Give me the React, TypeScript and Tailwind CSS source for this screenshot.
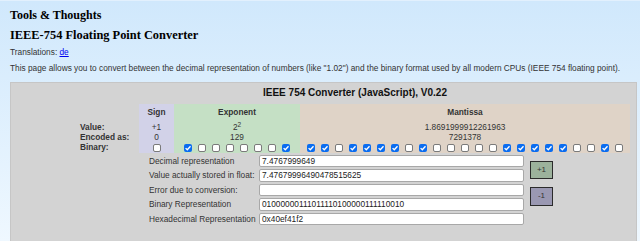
import React from "react";

const expBits = [1, 0, 0, 0, 0, 0, 0, 1];
const manBits = [1, 1, 0, 1, 1, 1, 1, 0, 1, 0, 0, 0, 0, 0, 1, 1, 1, 1, 1, 0, 0, 1, 0];

const Box = ({ on }: { on: boolean }) =>
  on ? (
    <span className="w-[8px] h-[8px] rounded-[2px] bg-[#0a6cf0] flex items-center justify-center">
      <svg width="8" height="8" viewBox="0 0 8 8">
        <path d="M1.6 4.1 L3.3 5.8 L6.5 2.2" stroke="white" strokeWidth="1.3" fill="none" />
      </svg>
    </span>
  ) : (
    <span className="w-[8px] h-[8px] rounded-[2px] bg-white border border-[#7a7a7a]" />
  );

const Row = ({ label, value }: { label: string; value: string }) => (
  <div className="flex items-center h-[12.5px]">
    <div className="w-[110px] text-[8.3px] text-[#333]">{label}</div>
    <div className="w-[265px] h-full bg-white border border-[#a8a8a8] rounded-[2px] px-[2px] flex items-center text-[8.3px] text-[#222] leading-none">
      {value}
    </div>
  </div>
);

export default function App() {
  return (
    <div className="w-[640px] h-[241px] overflow-hidden bg-gradient-to-b from-[#d0e8fc] to-[#eff8ff] border-t border-[#e2f0fd] font-['Liberation_Sans',Arial,sans-serif] text-[#222]">
      <div className="pl-[10px]">
        <div className="pt-[6px] h-[23px] font-['Liberation_Serif',serif] font-bold text-[12px] leading-[16px] text-black">
          Tools &amp; Thoughts
        </div>
        <div className="pt-[3px] h-[20px] font-['Liberation_Serif',serif] font-bold text-[12.4px] leading-[16px] text-black">
          IEEE-754 Floating Point Converter
        </div>
        <div className="pt-[2.5px] h-[14px] text-[8.3px] leading-[10px] text-[#333]">
          Translations: <a className="text-[#0000ee] underline">de</a>
        </div>
        <div className="pt-[5px] text-[8.3px] leading-[10px] text-[#333]">
          This page allows you to convert between the decimal representation of numbers (like "1.02") and the binary format used by all modern CPUs (IEEE 754 floating point).
        </div>

        <div className="mt-[8.5px] w-[627px] h-[160px] bg-[#d3d3d3] border border-[#c6c6c6] pl-[69px]">
          <div className="w-[550px] pt-[4px] text-center font-bold text-[10px] leading-[12px] text-[#111]">
            IEEE 754 Converter (JavaScript), V0.22
          </div>
          <div className="mt-[5px] flex text-[8.3px] text-[#333]">
            <div className="w-[59px] flex flex-col font-bold">
              <div className="h-[18px]" />
              <div className="h-[11px] flex items-center">Value:</div>
              <div className="h-[10px] flex items-center">Encoded as:</div>
              <div className="h-[10px] flex items-center">Binary:</div>
            </div>
            <div className="w-[35px] bg-[#d2d2e8] flex flex-col items-center">
              <div className="h-[18px] flex items-center font-bold">Sign</div>
              <div className="h-[11px] flex items-center">+1</div>
              <div className="h-[10px] flex items-center">0</div>
              <div className="h-[10px] flex items-center">
                <Box on={false} />
              </div>
            </div>
            <div className="w-[126px] bg-[#c5e0c5] flex flex-col items-center">
              <div className="h-[18px] flex items-center font-bold">Exponent</div>
              <div className="h-[11px] flex items-center">
                <span>
                  2<sup className="text-[6.5px]">2</sup>
                </span>
              </div>
              <div className="h-[10px] flex items-center">129</div>
              <div className="h-[10px] flex items-center gap-[6px]">
                {expBits.map((b, i) => (
                  <Box key={i} on={b === 1} />
                ))}
              </div>
            </div>
            <div className="w-[330px] bg-[#dfd3c7] flex flex-col items-center">
              <div className="h-[18px] flex items-center font-bold">Mantissa</div>
              <div className="h-[11px] flex items-center">1.8691999912261963</div>
              <div className="h-[10px] flex items-center">7291378</div>
              <div className="h-[10px] flex items-center gap-[6px]">
                {manBits.map((b, i) => (
                  <Box key={i} on={b === 1} />
                ))}
              </div>
            </div>
          </div>

          <div className="mt-[2px] flex">
            <div className="w-[69px]" />
            <div className="flex flex-col gap-[2px]">
              <Row label="Decimal representation" value="7.4767999649" />
              <Row label="Value actually stored in float:" value="7.47679996490478515625" />
              <Row label="Error due to conversion:" value="" />
              <Row label="Binary Representation" value="01000000111011110100000111110010" />
              <Row label="Hexadecimal Representation" value="0x40ef41f2" />
            </div>
            <div className="ml-[6px] pt-[6px] flex flex-col gap-[8px]">
              <button className="w-[23px] h-[18px] bg-[#9cb29c] border-[1.5px] border-[#2b2b2b] text-[8px] text-[#333] flex items-center justify-center">
                +1
              </button>
              <button className="w-[23px] h-[19px] bg-[#9a98b2] border-[1.5px] border-[#2b2b2b] text-[8px] text-[#333] flex items-center justify-center">
                -1
              </button>
            </div>
          </div>
        </div>
      </div>
    </div>
  );
}
